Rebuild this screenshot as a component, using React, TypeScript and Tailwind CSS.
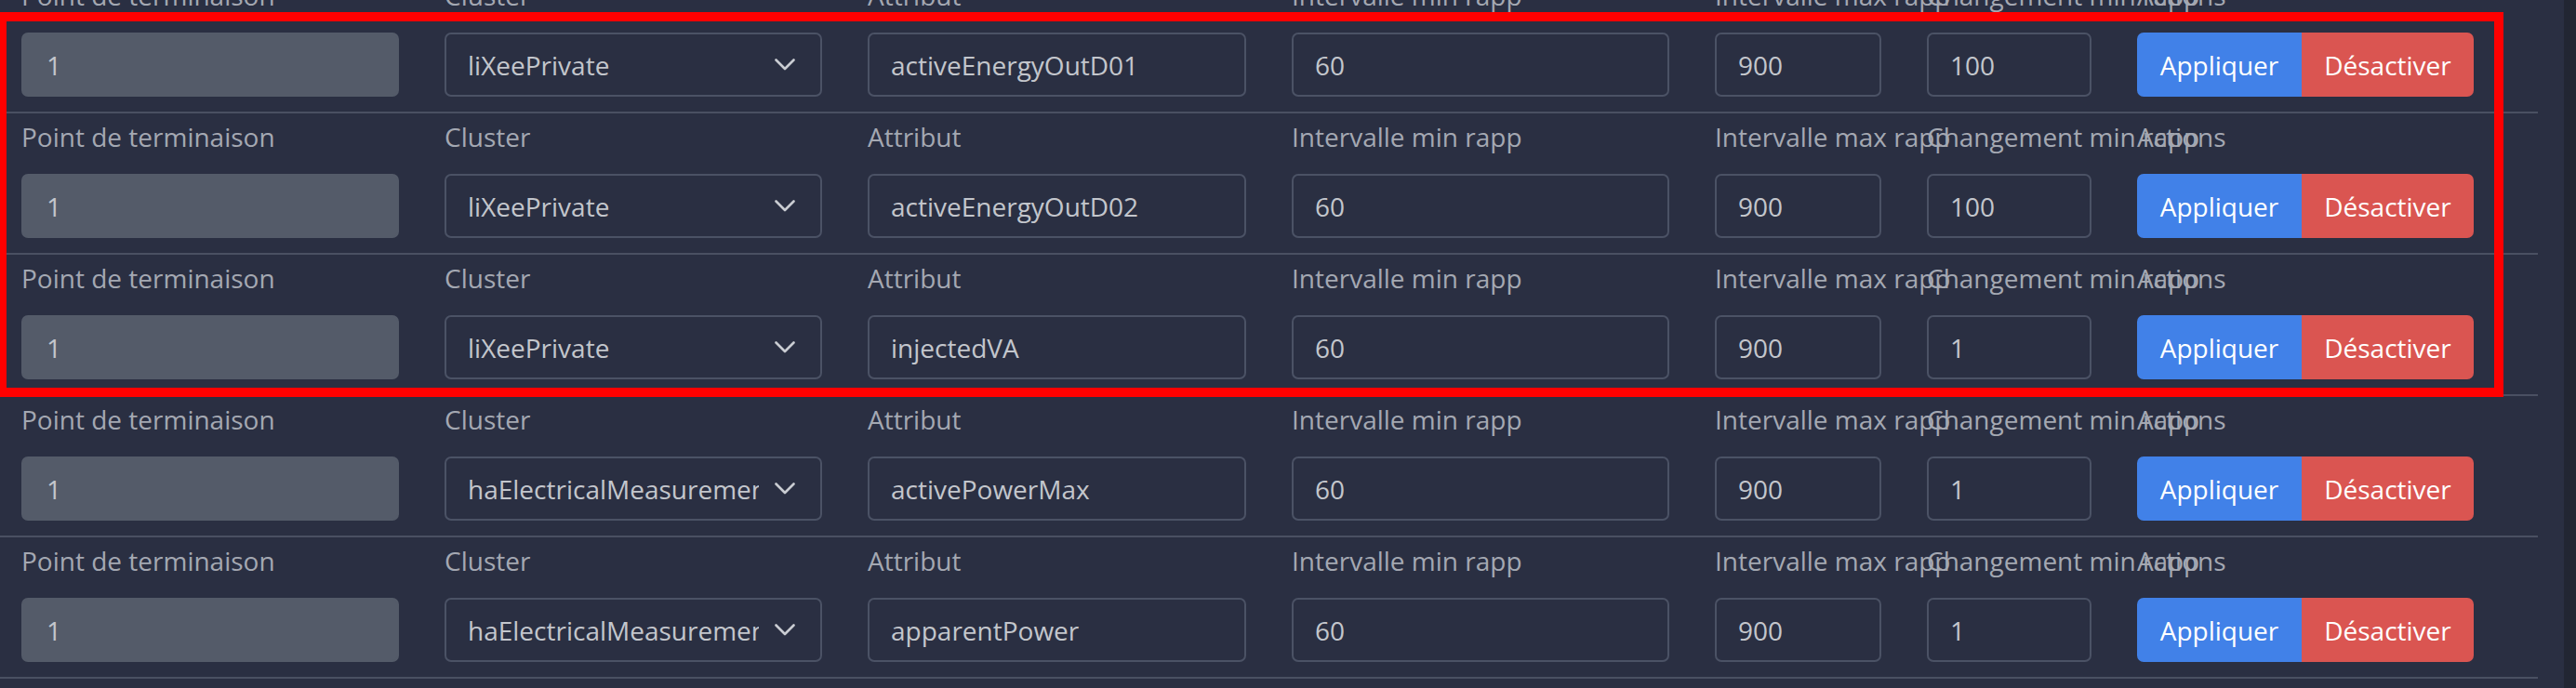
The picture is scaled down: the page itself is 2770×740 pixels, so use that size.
import React from "react";

type Row = {
  ep: string;
  cluster: string;
  attr: string;
  min: string;
  max: string;
  change: string;
};

const rows: Row[] = [
  { ep: "1", cluster: "liXeePrivate", attr: "activeEnergyOutD01", min: "60", max: "900", change: "100" },
  { ep: "1", cluster: "liXeePrivate", attr: "activeEnergyOutD02", min: "60", max: "900", change: "100" },
  { ep: "1", cluster: "liXeePrivate", attr: "injectedVA", min: "60", max: "900", change: "1" },
  { ep: "1", cluster: "haElectricalMeasurement", attr: "activePowerMax", min: "60", max: "900", change: "1" },
  { ep: "1", cluster: "haElectricalMeasurement", attr: "apparentPower", min: "60", max: "900", change: "1" },
];

const labels = [
  "Point de terminaison",
  "Cluster",
  "Attribut",
  "Intervalle min rapp",
  "Intervalle max rapp",
  "Changement min rapp",
  "Actions",
];

function Field({ value, disabled }: { value: string; disabled?: boolean }) {
  return (
    <div
      className={
        disabled
          ? "h-[69px] rounded-[7px] border-2 border-[#545b69] bg-[#545b69] pl-[25px] flex items-center text-[#c3c6cc] whitespace-nowrap overflow-hidden"
          : "h-[69px] rounded-[7px] border-2 border-[#4b5265] bg-[#2a2f42] pl-[23px] flex items-center text-[#c3c6cc] whitespace-nowrap overflow-hidden"
      }
    >
      {value}
    </div>
  );
}

function SelectBox({ value }: { value: string }) {
  return (
    <div className="h-[69px] rounded-[7px] border-2 border-[#4b5265] bg-[#2a2f42] pl-[23px] pr-[27px] flex items-center text-[#c3c6cc]">
      <span className="flex-1 overflow-hidden whitespace-nowrap">{value}</span>
      <svg className="ml-[17px] shrink-0" width="22" height="13" viewBox="0 0 22 13" fill="none">
        <path d="M1.5 1.5 L11 11 L20.5 1.5" stroke="#c9ccd2" strokeWidth="2.6" strokeLinecap="round" strokeLinejoin="round" />
      </svg>
    </div>
  );
}

function RowView({ r }: { r: Row }) {
  return (
    <div className="border-b-2 border-[#4a5062] pt-[4px] pb-[16px] pl-[23px]">
      <div className="grid grid-cols-[406px_406px_407px_406px_179px_177px_1fr] gap-x-[49px] gap-y-[19px]">
        {labels.map((l) => (
          <div key={l} className="h-[42px] leading-[42px] whitespace-nowrap text-[#a4a8b2]">
            {l}
          </div>
        ))}
        <Field value={r.ep} disabled />
        <SelectBox value={r.cluster} />
        <Field value={r.attr} />
        <Field value={r.min} />
        <Field value={r.max} />
        <Field value={r.change} />
        <div className="flex h-[69px]">
          <div className="w-[177px] h-full rounded-l-[7px] bg-[#4181e8] text-white flex items-center justify-center">
            Appliquer
          </div>
          <div className="w-[185px] h-full rounded-r-[7px] bg-[#da5551] text-white flex items-center justify-center">
            Désactiver
          </div>
        </div>
      </div>
    </div>
  );
}

export default function App() {
  return (
    <div
      className="relative flex h-[740px] w-[2770px] overflow-hidden bg-[#2a2f42] text-[28px]"
      style={{ fontFamily: '"Open Sans", "Noto Sans", sans-serif' }}
    >
      <div className="w-[2757px] shrink-0">
        <div className="w-[2729px] -mt-[30px]">
          {rows.map((r, i) => (
            <RowView key={i} r={r} />
          ))}
        </div>
      </div>
      <div className="w-[13px] shrink-0 bg-[#222633]" />
      <div className="pointer-events-none absolute left-[-3px] top-[13px] h-[414px] w-[2695px] border-[10px] border-[#ff0000]" />
    </div>
  );
}
